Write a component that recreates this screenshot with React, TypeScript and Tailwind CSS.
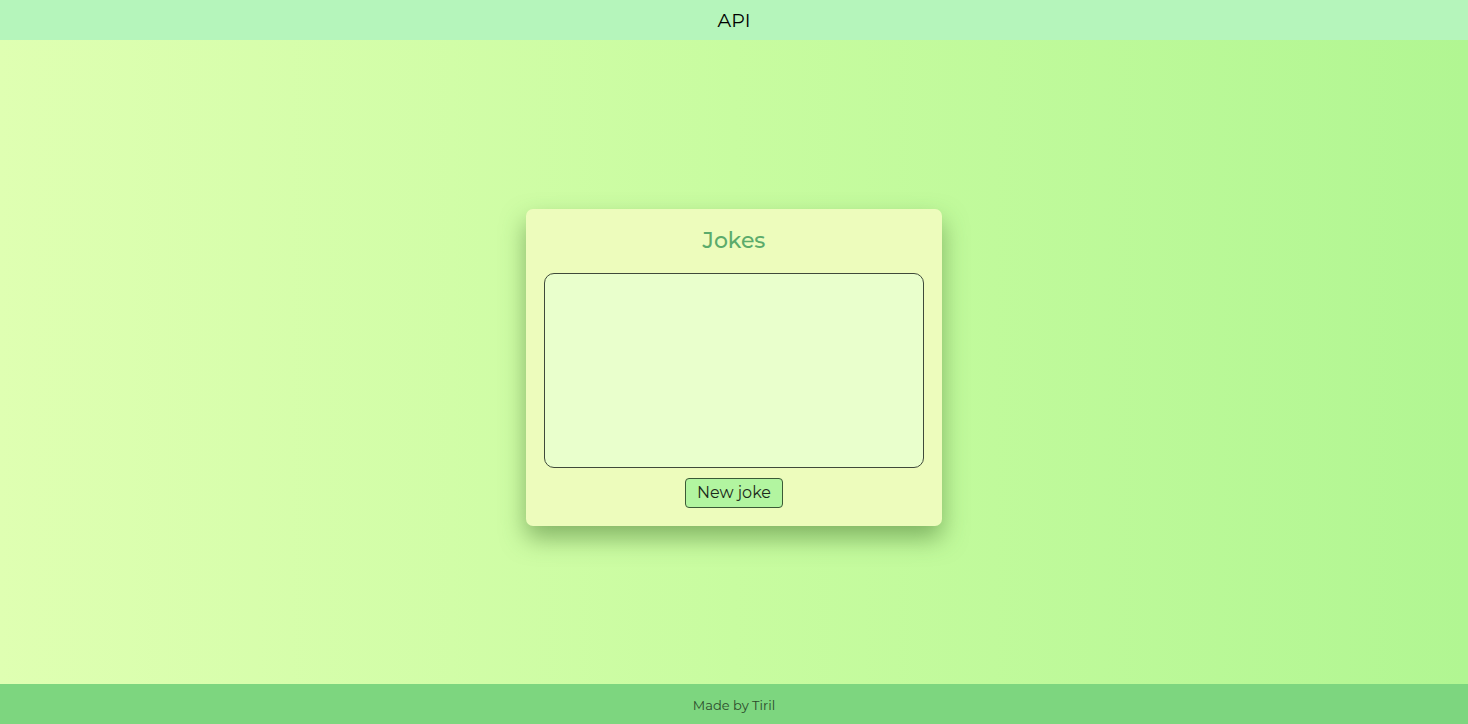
import React from "react";

export default function App() {
  const font = { fontFamily: '"Montserrat", "Open Sans", "Noto Sans", sans-serif' };
  return (
    <div className="flex h-[724px] w-full flex-col" style={font}>
      <header className="flex h-[40px] shrink-0 items-center justify-center bg-[#b5f5bb] pt-[2px] text-[19px] text-black">
        API
      </header>
      <main className="flex flex-1 items-center justify-center bg-gradient-to-r from-[#dfffb2] via-[#c8fca0] to-[#b1f692] pt-[10px]">
        <div className="flex w-[416px] flex-col items-center rounded-[7px] bg-[#edfcbc] px-[18px] pt-[18px] pb-[18px] shadow-[0_12px_24px_rgba(60,110,40,0.5)]">
          <h1 className="text-[22px] font-medium leading-[28px] text-[#5bab6b]">Jokes</h1>
          <textarea
            className="mt-[18px] h-[195px] w-[380px] resize-none rounded-[10px] border border-[#3f4a3a] bg-[#e9ffcc] outline-none"
            readOnly
          />
          <button className="mt-[10px] h-[30px] w-[98px] rounded-[4px] border border-[#3b5a36] bg-[#b2f5a0] text-[16px] text-[#1c2a1a]">
            New joke
          </button>
        </div>
      </main>
      <footer className="flex h-[40px] shrink-0 items-center justify-center bg-[#7dd67f] pt-[3px] text-[13px] text-[#2c4a2c]">
        Made by Tiril
      </footer>
    </div>
  );
}
